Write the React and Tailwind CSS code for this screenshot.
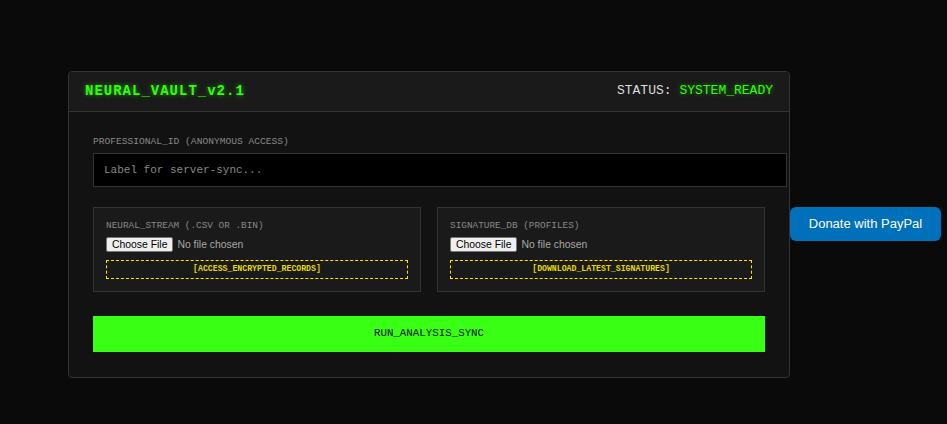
import { useState } from 'react';

const mono = { fontFamily: '"Liberation Mono", "Courier New", monospace' };

function UploadPanel({ label, action }) {
  const [fileName, setFileName] = useState('');

  return (
    <div className="bg-[#1a1a1a] border border-[#333] p-3 flex flex-col">
      <label className="text-[9.4px] leading-[12px] text-[#888] uppercase mb-[5px]">{label}</label>
      <input
        type="file"
        onChange={(e) => setFileName(e.target.files?.[0]?.name || '')}
        className="text-[10.4px] leading-[15px] text-[#a8a8a8] [font-family:'Liberation_Sans',Arial,sans-serif] file:bg-[#efefef] file:text-black file:border file:border-[#767676] file:rounded-[2px] file:px-[5px] file:mr-[4px] file:h-[15px] file:leading-[13px]"
        title={fileName}
      />
      <button className="mt-[8px] h-[19px] w-full border border-dashed border-[#ffe600] text-[#e8d800] text-[8.2px] font-bold leading-none flex items-center justify-center">
        [{action}]
      </button>
    </div>
  );
}

export default function App() {
  const [label, setLabel] = useState('');

  return (
    <div className="min-h-screen bg-[#0a0a0a] flex items-center pt-[24px] pl-[68px]" style={mono}>
      <div className="w-[722px] bg-[#121212] border border-[#333] rounded-[4px] overflow-hidden">
        {/* header */}
        <div className="h-[40px] bg-[#1a1a1a] border-b border-[#333] px-4 flex items-center justify-between">
          <h1 className="text-[14px] font-bold tracking-[1px] text-[#33ff00] [text-shadow:0_0_5px_rgba(51,255,0,0.6)]">
            NEURAL_VAULT_v2.1
          </h1>
          <div className="text-[13px] text-[#ddd]">
            STATUS:{' '}
            <span className="text-[#33ff00] [text-shadow:0_0_5px_rgba(51,255,0,0.5)]">SYSTEM_READY</span>
          </div>
        </div>

        {/* body */}
        <div className="px-6 pt-6 pb-[25px]">
          <label className="block text-[9.6px] leading-[12px] text-[#888] mb-[5px]">
            PROFESSIONAL_ID (ANONYMOUS ACCESS)
          </label>
          <input
            type="text"
            value={label}
            onChange={(e) => setLabel(e.target.value)}
            placeholder="Label for server-sync..."
            className="box-content w-full h-[32px] px-[10px] bg-black border border-[#333] text-[11px] text-[#ccc] placeholder:text-[#888] outline-none"
          />

          <div className="grid grid-cols-2 gap-4 mt-[20px]">
            <UploadPanel label="NEURAL_STREAM (.CSV OR .BIN)" action="ACCESS_ENCRYPTED_RECORDS" />
            <UploadPanel label="SIGNATURE_DB (PROFILES)" action="DOWNLOAD_LATEST_SIGNATURES" />
          </div>

          <button className="mt-[24px] w-full h-[36px] bg-[#39ff14] text-[#111] text-[10.8px]">
            RUN_ANALYSIS_SYNC
          </button>
        </div>
      </div>

      <button className="ml-auto mr-[6px] w-[151px] h-[34px] rounded-[6px] bg-[#0070ba] text-white text-[13px] [font-family:'Liberation_Sans',Arial,sans-serif]">
        Donate with PayPal
      </button>
    </div>
  );
}
